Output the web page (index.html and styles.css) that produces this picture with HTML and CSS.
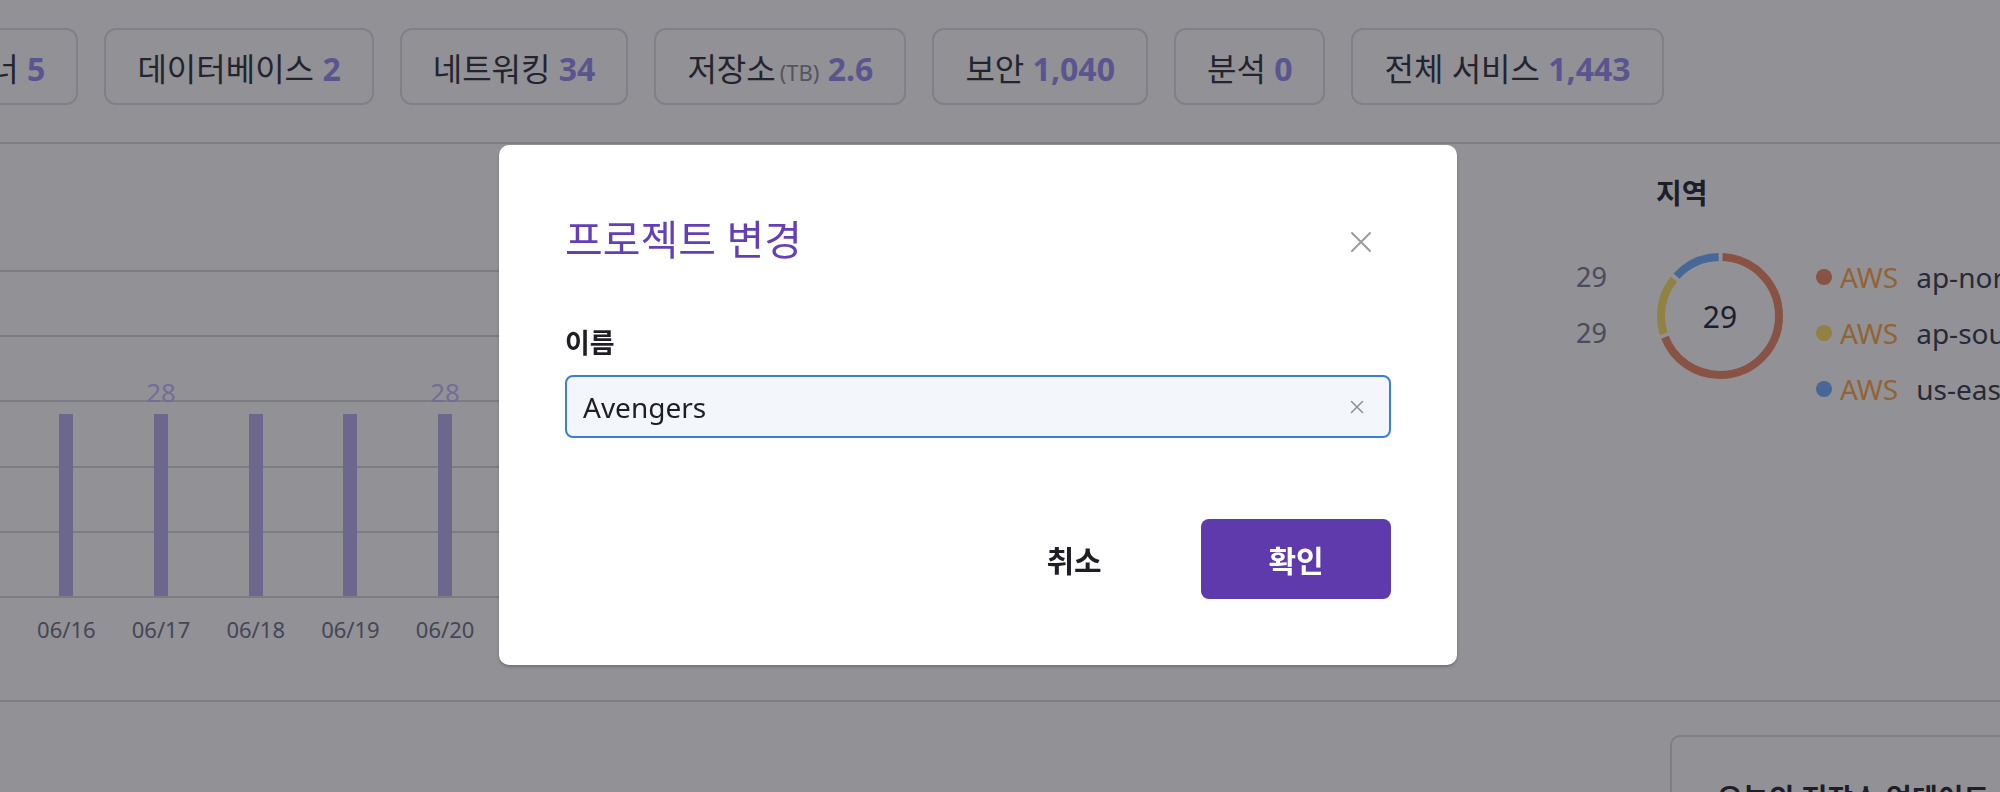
FILE: index.html
```html
<!DOCTYPE html>
<html lang="ko">
<head>
<meta charset="utf-8">
<title>프로젝트 변경</title>
<link rel="stylesheet" href="styles.css">
</head>
<body>
<div class="page">
  <section class="summary">
    <div class="chips">
      <div class="chip"><span class="chip-text">컨테이너 <b>5</b></span></div>
      <div class="chip"><span class="chip-text">데이터베이스 <b>2</b></span></div>
      <div class="chip"><span class="chip-text">네트워킹 <b>34</b></span></div>
      <div class="chip"><span class="chip-text">저장소<span class="unit">(TB)</span> <b>2.6</b></span></div>
      <div class="chip"><span class="chip-text">보안 <b>1,040</b></span></div>
      <div class="chip"><span class="chip-text">분석 <b>0</b></span></div>
      <div class="chip"><span class="chip-text">전체 서비스 <b>1,443</b></span></div>
    </div>
  </section>

  <section class="middle">
    <div class="chart">
      <div class="plot">
        <div class="col"><div class="bar"></div></div>
        <div class="col"><span class="val">28</span><div class="bar"></div></div>
        <div class="col"><div class="bar"></div></div>
        <div class="col"><div class="bar"></div></div>
        <div class="col"><span class="val">28</span><div class="bar"></div></div>
        <div class="col"><div class="bar"></div></div>
        <div class="col"><div class="bar"></div></div>
        <div class="col"><span class="val">28</span><div class="bar"></div></div>
        <div class="col"><div class="bar"></div></div>
        <div class="col"><div class="bar"></div></div>
        <div class="col"><span class="val">28</span><div class="bar"></div></div>
        <div class="col"><div class="bar"></div></div>
        <div class="col"><div class="bar"></div></div>
        <div class="col"><span class="val">28</span><div class="bar"></div></div>
      </div>
      <div class="dates">
        <span>06/16</span><span>06/17</span><span>06/18</span><span>06/19</span><span>06/20</span><span>06/21</span><span>06/22</span>
        <span>06/23</span><span>06/24</span><span>06/25</span><span>06/26</span><span>06/27</span><span>06/28</span><span>06/29</span>
      </div>
    </div>

    <div class="region">
      <h3 class="region-title">지역</h3>
      <div class="region-body">
        <div class="values">
          <span>29</span>
          <span>29</span>
        </div>
        <div class="donut">
          <svg width="126" height="126" viewBox="0 0 126 126">
            <g transform="rotate(-90 63 63)" fill="none" stroke-width="8">
              <circle cx="63" cy="63" r="59" stroke="#ee8c6c" stroke-dasharray="253.3 400" stroke-dashoffset="-2.6"></circle>
              <circle cx="63" cy="63" r="59" stroke="#ffe269" stroke-dasharray="57.7 400" stroke-dashoffset="-259.5"></circle>
              <circle cx="63" cy="63" r="59" stroke="#78b4ff" stroke-dasharray="47.4 400" stroke-dashoffset="-321.3"></circle>
            </g>
          </svg>
          <span class="donut-total">29</span>
        </div>
        <ul class="legend">
          <li><i class="dot dot-a"></i><span class="vendor">AWS</span><span class="zone">ap-northeast-2</span></li>
          <li><i class="dot dot-b"></i><span class="vendor">AWS</span><span class="zone">ap-southeast-1</span></li>
          <li><i class="dot dot-c"></i><span class="vendor">AWS</span><span class="zone">us-east-1</span></li>
        </ul>
      </div>
    </div>
  </section>

  <section class="lower">
    <div class="card">
      <h3 class="card-title">오늘의 저장소 업데이트</h3>
    </div>
  </section>
</div>

<div class="backdrop">
  <div class="modal" role="dialog" aria-labelledby="modal-title">
    <div class="modal-head">
      <h2 id="modal-title" class="modal-title">프로젝트 변경</h2>
      <button class="close" type="button" aria-label="닫기">
        <svg width="22" height="22" viewBox="0 0 22 22"><path d="M2 2 L20 20 M20 2 L2 20" stroke="#9b9b9b" stroke-width="2" fill="none" stroke-linecap="round"/></svg>
      </button>
    </div>
    <label class="field-label" for="name">이름</label>
    <div class="field">
      <input id="name" class="field-input" type="text" value="Avengers">
      <button class="clear" type="button" aria-label="지우기">
        <svg width="14" height="14" viewBox="0 0 14 14"><path d="M1.5 1.5 L12.5 12.5 M12.5 1.5 L1.5 12.5" stroke="#8e8e95" stroke-width="1.5" fill="none" stroke-linecap="round"/></svg>
      </button>
    </div>
    <div class="actions">
      <button class="btn btn-ghost" type="button">취소</button>
      <button class="btn btn-primary" type="button">확인</button>
    </div>
  </div>
</div>
</body>
</html>
```

FILE: styles.css
```css
html, body {
  margin: 0;
  padding: 0;
  width: 2000px;
  height: 792px;
  overflow: hidden;
  background: #ffffff;
  font-family: "Noto Sans", "Noto Sans CJK KR", sans-serif;
  color: #3d3d45;
}

.page {
  width: 2000px;
}

/* summary chips */
.summary {
  padding: 28px 0 37px;
  border-bottom: 2px solid #dcdce0;
}

.chips {
  display: flex;
  gap: 26px;
  margin-left: -132px;
}

.chip {
  flex: 0 0 auto;
  height: 77px;
  box-sizing: border-box;
  padding: 0 31px;
  border: 2px solid #e0e0e5;
  border-radius: 12px;
  display: flex;
  align-items: center;
  font-size: 32px;
  color: #3a3a44;
}

.chip-text {
  white-space: nowrap;
}

.chip b {
  font-weight: 700;
  color: #9d92f2;
}

.chip .unit {
  font-size: 22px;
  color: #92929b;
  margin-left: 4px;
}

/* middle section */
.middle {
  height: 556px;
  border-bottom: 2px solid #dcdce0;
  display: flex;
  align-items: flex-start;
}

.chart {
  flex: 0 0 1442px;
  margin-top: 126px;
}

.plot {
  height: 328px;
  box-sizing: border-box;
  padding: 0 0 2px 19px;
  display: flex;
  align-items: flex-end;
  background: repeating-linear-gradient(to bottom, #d9d9dd 0, #d9d9dd 2px, transparent 2px, transparent 65.2px);
}

.col {
  flex: 0 0 94.7px;
  display: flex;
  flex-direction: column;
  align-items: center;
  justify-content: flex-end;
}

.val {
  font-size: 26px;
  line-height: 30px;
  color: #cabdff;
  margin-bottom: 7px;
}

.bar {
  width: 14px;
  height: 182px;
  background: #bcb3ed;
}

.dates {
  display: flex;
  padding-left: 19px;
  margin-top: 16px;
}

.dates span {
  flex: 0 0 94.7px;
  text-align: center;
  font-size: 22px;
  line-height: 30px;
  color: #77778a;
}

/* region panel */
.region {
  margin-left: 105px;
  padding-top: 30px;
}

.region-title {
  margin: 0 0 37px 109px;
  font-size: 28px;
  line-height: 38px;
  font-weight: 700;
  color: #2e2e3a;
}

.region-body {
  display: flex;
  align-items: flex-start;
}

.values {
  width: 60px;
  display: flex;
  flex-direction: column;
  align-items: flex-end;
}

.values span {
  height: 56px;
  line-height: 56px;
  font-size: 27px;
  color: #808092;
}

.donut {
  position: relative;
  width: 126px;
  height: 126px;
  margin: 4px 33px 0 50px;
}

.donut svg {
  display: block;
}

.donut-total {
  position: absolute;
  inset: 0;
  display: flex;
  align-items: center;
  justify-content: center;
  font-size: 30px;
  color: #2e2e40;
}

.legend {
  list-style: none;
  margin: 0;
  padding: 0;
}

.legend li {
  height: 56px;
  display: flex;
  align-items: center;
  white-space: nowrap;
  font-size: 28px;
}

.dot {
  width: 16px;
  height: 16px;
  border-radius: 50%;
  margin-right: 8px;
}

.dot-a { background: #ee8c6c; }
.dot-b { background: #ffe269; }
.dot-c { background: #78b4ff; }

.vendor {
  color: #ffae50;
  margin-right: 18px;
}

.zone {
  color: #414452;
}

/* lower section */
.lower {
  padding-top: 33px;
}

.card {
  margin-left: 1670px;
  width: 600px;
  height: 200px;
  border: 2px solid #dcdce0;
  border-radius: 10px;
  padding: 41px 0 0 45px;
  box-sizing: border-box;
}

.card-title {
  margin: 0;
  font-size: 28px;
  line-height: 40px;
  font-weight: 700;
  color: #2e2e3a;
  white-space: nowrap;
}

/* modal */
.backdrop {
  position: fixed;
  inset: 0;
  background: rgba(10, 10, 22, 0.45);
  display: flex;
  align-items: flex-start;
  padding: 145px 0 0 499px;
}

.modal {
  width: 958px;
  height: 520px;
  box-sizing: border-box;
  padding: 68px 66px 65px;
  background: #ffffff;
  border-radius: 10px;
  box-shadow: 0 2px 3px rgba(0, 0, 0, 0.22);
  display: flex;
  flex-direction: column;
  font-family: "Noto Sans", "Noto Sans CJK KR", sans-serif;
}

.modal-head {
  display: flex;
  align-items: center;
  justify-content: space-between;
  height: 52px;
}

.modal-title {
  margin: 0;
  font-size: 41px;
  line-height: 52px;
  font-weight: 400;
  color: #6440b8;
}

.close {
  width: 40px;
  height: 40px;
  margin: 6px 10px 0 0;
  padding: 0;
  border: 0;
  background: none;
  display: flex;
  align-items: center;
  justify-content: center;
}

.field-label {
  margin-top: 60px;
  font-size: 27px;
  line-height: 36px;
  font-weight: 700;
  color: #1e1e24;
}

.field {
  margin-top: 14px;
  height: 63px;
  box-sizing: border-box;
  border: 2px solid #3a7de0;
  border-radius: 8px;
  background: #f3f6fb;
  display: flex;
  align-items: center;
  padding: 0 24px 0 16px;
}

.field-input {
  flex: 1;
  border: 0;
  outline: none;
  background: transparent;
  padding: 0;
  font-family: "Noto Sans", "Noto Sans CJK KR", sans-serif;
  font-size: 28px;
  color: #1e1e24;
}

.clear {
  width: 16px;
  height: 16px;
  padding: 0;
  border: 0;
  background: none;
  display: flex;
  align-items: center;
  justify-content: center;
}

.actions {
  margin-top: 81px;
  display: flex;
  justify-content: flex-end;
  gap: 32px;
}

.btn {
  width: 190px;
  height: 80px;
  border: 0;
  border-radius: 8px;
  font-family: "Noto Sans", "Noto Sans CJK KR", sans-serif;
  font-size: 30px;
  font-weight: 700;
}

.btn-ghost {
  background: transparent;
  color: #1e1e24;
}

.btn-primary {
  background: #5f3aad;
  color: #ffffff;
}
```
